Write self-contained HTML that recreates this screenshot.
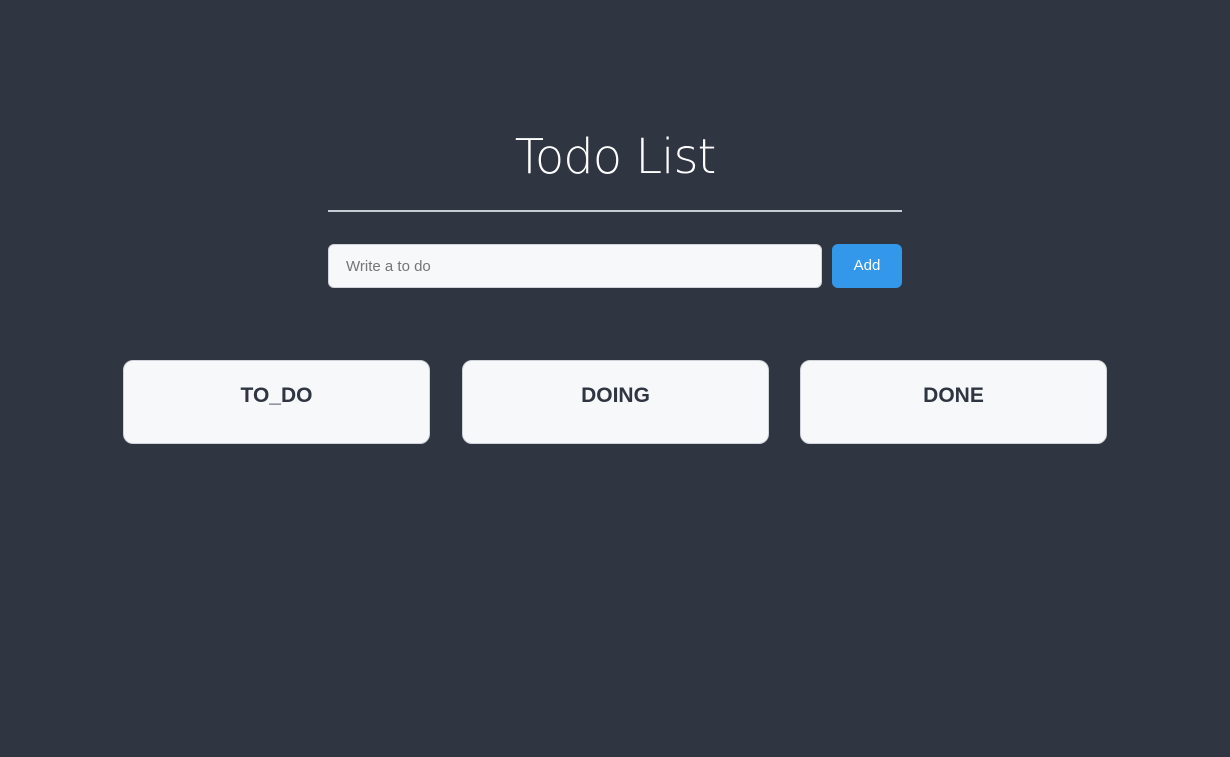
<!DOCTYPE html>
<html><head><meta charset="utf-8"><style>
html,body{margin:0;padding:0;}
body{width:1230px;height:757px;background:#2f3541;font-family:"Liberation Sans",sans-serif;position:relative;overflow:hidden;}
h1{position:absolute;top:127px;left:0;width:1230px;text-align:center;margin:0;font-size:48px;color:#fff;line-height:60px;font-family:"DejaVu Sans","Liberation Sans",sans-serif;font-weight:200;letter-spacing:-1px;}
.line{position:absolute;left:328px;top:210px;width:574px;height:2px;background:#c8ccd2;}
.input{position:absolute;left:328px;top:244px;width:494px;height:44px;box-sizing:border-box;background:#f6f8fa;border:1px solid #d0d4da;border-radius:6px;padding-left:17px;line-height:44px;font-size:15px;color:#757575;}
.btn{position:absolute;left:832px;top:244px;width:70px;height:44px;background:#3398ea;border-radius:6px;color:#fff;font-size:15px;text-align:center;line-height:44px;}
.card{position:absolute;top:360px;width:307px;height:84px;box-sizing:border-box;background:#f6f8fa;border:1px solid #d0d4da;border-radius:10px;text-align:center;font-weight:bold;font-size:21px;color:#2f3541;padding-top:23px;}
</style></head><body>
<h1>Todo List</h1>
<div class="line"></div>
<div class="input">Write a to do</div>
<div class="btn">Add</div>
<div class="card" style="left:123px">TO_DO</div>
<div class="card" style="left:462px">DOING</div>
<div class="card" style="left:800px">DONE</div>
</body></html>
